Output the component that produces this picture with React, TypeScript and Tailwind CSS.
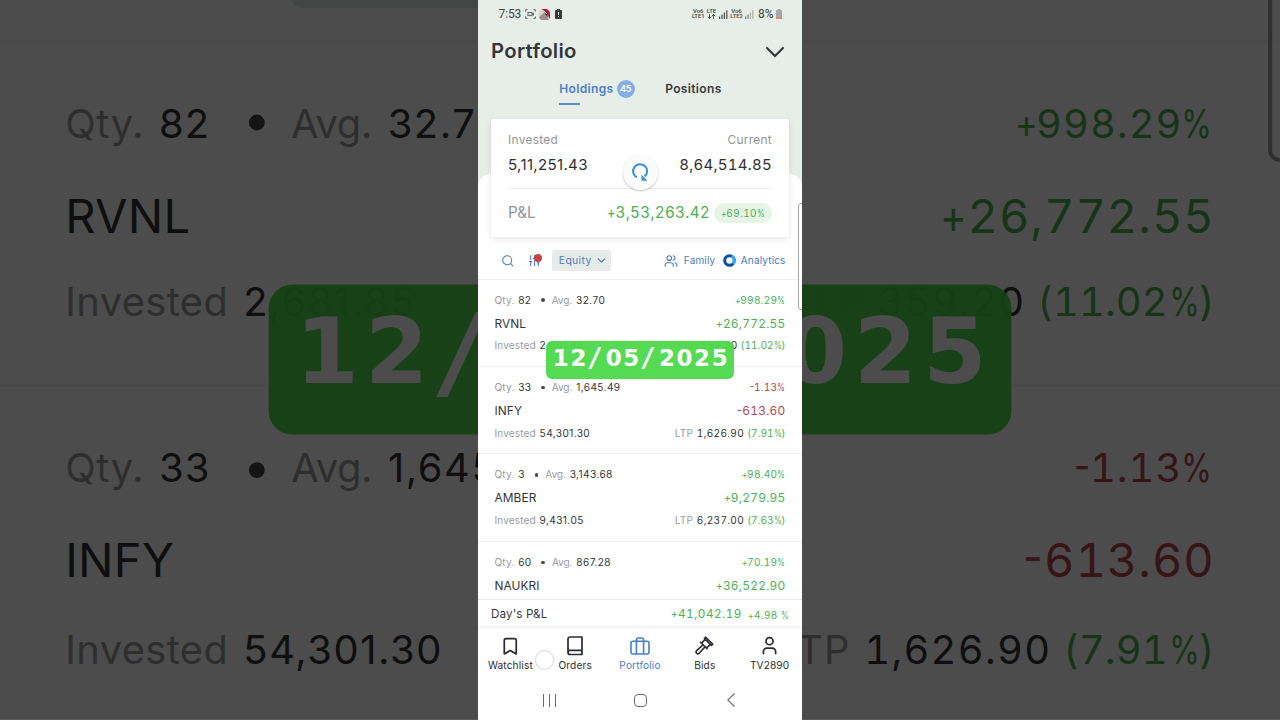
import type { ReactNode } from "react";
import { Bookmark, ChevronDown, Search, SlidersVertical, User, Users } from "lucide-react";

type Holding = {
  name: string;
  qty: string;
  avg: string;
  invested?: string;
  pct: string;
  pnl: string;
  ltp?: string;
  day?: string;
};

const holdings: Holding[] = [
  { name: "RVNL", qty: "82", avg: "32.70", invested: "2,681.85", pct: "+998.29%", pnl: "+26,772.55", ltp: "359.20", day: "(11.02%)" },
  { name: "INFY", qty: "33", avg: "1,645.49", invested: "54,301.30", pct: "-1.13%", pnl: "-613.60", ltp: "1,626.90", day: "(7.91%)" },
  { name: "AMBER", qty: "3", avg: "3,143.68", invested: "9,431.05", pct: "+98.40%", pnl: "+9,279.95", ltp: "6,237.00", day: "(7.63%)" },
  { name: "NAUKRI", qty: "60", avg: "867.28", pct: "+70.19%", pnl: "+36,522.90" },
];

/** Tabular figure with narrowed sign and percent glyphs. */
function Figure({ text }: { text: string }) {
  const parts = text.split(/([+%-])/).filter(Boolean);
  return (
    <>
      {parts.map((p, i) => {
        if (p === "+") return <span key={i} className="-mr-[0.13em] inline-block origin-left scale-x-[0.86]">+</span>;
        if (p === "-") return <span key={i} className="-mr-[0.18em] inline-block origin-left scale-x-[0.9] -translate-y-[0.05em]">-</span>;
        if (p === "%") return <span key={i} className="-mr-[0.2em] inline-block origin-left scale-x-[0.78]">%</span>;
        return <span key={i}>{p}</span>;
      })}
    </>
  );
}

type Side = "left" | "right";

function HoldingRow({ h, only }: { h: Holding; only?: Side }) {
  const tone = h.pnl.startsWith("-") ? "text-[#b5444f]" : "text-[#4eaf53]";
  const left = only !== "right";
  const right = only !== "left";
  return (
    <div className={`h-[87.4px] shrink-0 border-t px-[16.5px] pt-[13px] text-[10.1px] text-[#343538] ${only ? "border-[#f4f4f4]" : "border-[#ededed]"}`}>
      <div className="flex h-[15px] items-center leading-[15px]">
        {left && (
          <div className="flex items-center whitespace-nowrap">
            <span className="text-[#9b9b9f] tracking-[0.15px]">Qty.</span>
            <span className="ml-[3.8px] tracking-[0.25px]">{h.qty}</span>
            <span className="ml-[10px] size-[3.7px] shrink-0 rounded-full bg-[#46474b]" />
            <span className="ml-[6.8px] text-[#9b9b9f] tracking-[-0.1px]">Avg.</span>
            <span className="ml-[4px] tracking-[0.4px]">{h.avg}</span>
          </div>
        )}
        {right && (
          <span className={`ml-auto tabular-nums tracking-[0.27px] ${tone}`}><Figure text={h.pct} /></span>
        )}
      </div>
      <div className="mt-[6.9px] flex h-[18px] items-center text-[11.9px] leading-[18px]">
        {left && <span className="tracking-[0.08px]">{h.name}</span>}
        {right && (
          <span className={`ml-auto tabular-nums tracking-[0.25px] ${tone}`}><Figure text={h.pnl} /></span>
        )}
      </div>
      {h.invested && (
        <div className="mt-[5.8px] flex h-[15px] items-center leading-[15px]">
          {left && (
            <div className="flex whitespace-nowrap">
              <span className="text-[#9b9b9f] tracking-[0.1px]">Invested</span>
              <span className="ml-[3.8px] tracking-[0.4px]">{h.invested}</span>
            </div>
          )}
          {right && (
            <div className="ml-auto flex tabular-nums tracking-[0.33px] whitespace-nowrap">
              <span className="text-[#9b9b9f]">LTP</span>
              <span className="ml-[3.4px]">{h.ltp}</span>
              <span className="ml-[3px] tracking-[0.03px] text-[#4eaf53]"><Figure text={h.day ?? ""} /></span>
            </div>
          )}
        </div>
      )}
    </div>
  );
}

function Slash() {
  return <span className="-ml-[1px] w-[18.7px] font-['DejaVu_Sans_Mono',monospace] text-[26px] tracking-normal">/</span>;
}

function DateBadge({ only }: { only?: Side }) {
  return (
    <div className="flex h-[38.4px] w-[188.5px] items-start rounded-[6px] bg-[#4cd94a]/95 pt-[1px] pr-[5px] pl-[7px] font-['DejaVu_Sans',sans-serif] text-[23px] leading-[32px] font-bold tracking-[1.6px] text-white">
      {only !== "right" && (
        <>
          <span>12</span>
          <Slash />
        </>
      )}
      {!only && (
        <>
          <span>05</span>
          <Slash />
        </>
      )}
      {only !== "left" && <span className="ml-auto">{only ? "025" : "2025"}</span>}
    </div>
  );
}

function ZoomedSide({ side }: { side: Side }) {
  const left = side === "left";
  return (
    <div className={`relative flex h-[720px] w-[478px] shrink-0 overflow-hidden ${left ? "" : "justify-end"}`}>
      <div className={`relative h-[182.3px] w-[324px] shrink-0 scale-[3.951] overflow-hidden bg-white ${left ? "origin-top-left" : "origin-top-right"}`}>
        <div className="flex h-[9.8px] pl-[74px]">
          {left && <div className="h-[2px] w-[59px] rounded-b-[2px] bg-[#e5ebe8]" />}
        </div>
        <HoldingRow h={holdings[0]} only={side} />
        <HoldingRow h={holdings[1]} only={side} />
        <div className="absolute top-[72px] left-[67.8px]">
          <DateBadge only={side} />
        </div>
        {!left && (
          <div className="absolute -top-[66.5px] -right-[4.9px] h-[107px] w-[8px] rounded-[3px] border-[0.7px] border-[#9d9d9d] bg-white/60" />
        )}
        <div className="absolute inset-0 bg-black/70" />
      </div>
    </div>
  );
}

function Signal({ faded = false }: { faded?: boolean }) {
  return (
    <svg width="9" height="9" viewBox="0 0 9 9" fill="#4b504d">
      <rect x="0" y="6.5" width="1.2" height="2.5" opacity={faded ? 0.7 : 1} />
      <rect x="2.4" y="4.5" width="1.2" height="4.5" opacity={faded ? 0.7 : 1} />
      <rect x="4.8" y="2.5" width="1.2" height="6.5" opacity={faded ? 0.4 : 1} />
      <rect x="7.2" y="0.3" width="1.2" height="8.7" opacity={faded ? 0.4 : 1} />
    </svg>
  );
}

function StackedLabel({ top, bottom }: { top: string; bottom: ReactNode }) {
  return (
    <span className="flex flex-col items-center text-[5.9px] leading-[5.2px] font-semibold text-[#4a504d]">
      <span>{top}</span>
      <span className="flex h-[5.2px] items-center">{bottom}</span>
    </span>
  );
}

function StatusBar() {
  return (
    <div className="flex h-[28px] items-center pr-[20px] pl-[20.5px] font-['Roboto',sans-serif] text-[12px] text-[#404643]">
      <span className="w-[22px] tracking-[-0.1px]">7:53</span>
      <svg className="ml-[4px]" width="11" height="10" viewBox="0 0 11 10" fill="none" stroke="#5f6562" strokeWidth="1">
        <path d="M.6 2.5V.7h2M8.4.7h2v1.8M10.4 7.5v1.8h-2M2.6 9.3h-2V7.5" />
        <rect x="3" y="3.4" width="4" height="3.2" />
        <path d="m7 5 1.5-1v2.2z" />
      </svg>
      <svg className="ml-[3.5px]" width="11" height="11" viewBox="0 0 11 11">
        <rect width="11" height="11" rx="4" fill="#d9d3d0" />
        <path d="M2.5 0H6a5 5 0 0 1 5 5v5C9.5 8 8.5 3 2.5 0z" fill="#b40f3b" />
        <path d="M0 8.5 4.5 4l4 2.5 1 4.5H2z" fill="#9b8f8e" />
        <path d="m4.5 3 4 2.5V8z" fill="#3e3034" />
      </svg>
      <svg className="ml-[4.5px]" width="7" height="10" viewBox="0 0 7 10">
        <path d="M2 0h3v1h1a1 1 0 0 1 1 1v7a1 1 0 0 1-1 1H1a1 1 0 0 1-1-1V2a1 1 0 0 1 1-1h1z" fill="#363c39" />
        <path d="M3.5 3v3M3.5 7v1" stroke="#e8eee9" strokeWidth="1" />
      </svg>
      <span className="ml-auto"><StackedLabel top="Vo6" bottom="LTE1" /></span>
      <span className="ml-[2px]">
        <StackedLabel
          top="LTE"
          bottom={
            <svg width="9" height="5" viewBox="0 0 9 5" fill="none" stroke="#3f4542" strokeWidth="0.9">
              <path d="M2.5 0v4.5M.8 2.8l1.7 1.8 1.7-1.8M6.5 5V.5M4.8 2.2 6.5.5l1.7 1.7" />
            </svg>
          }
        />
      </span>
      <span className="ml-[3px]"><Signal /></span>
      <span className="ml-[2px]"><StackedLabel top="Vo6" bottom="LTE2" /></span>
      <span className="ml-[2px]"><Signal faded /></span>
      <span className="ml-[4px]">8%</span>
      <svg className="ml-[2px]" width="6.5" height="10" viewBox="0 0 6.5 10">
        <path d="M1.9 0h2.7v1h.9a1 1 0 0 1 1 1v8H0V2a1 1 0 0 1 1-1h.9z" fill="#a6aaa7" />
        <rect y="8" width="6.5" height="2" fill="#e5896c" />
      </svg>
    </div>
  );
}

function SummaryCard() {
  return (
    <div className="relative mx-[13px] mt-[13px] h-[117.5px] rounded-[3px] bg-white px-[17px] pt-[13px] shadow-[0_2px_6px_rgba(0,0,0,0.1)]">
      <div className="flex h-[16px] items-center justify-between text-[11.9px] tracking-[0.3px] text-[#94959a]">
        <span>Invested</span>
        <span>Current</span>
      </div>
      <div className="mt-[6.5px] flex h-[22px] items-center justify-between text-[15px] text-[#2f3033]">
        <span className="tracking-[0.35px]">5,11,251.43</span>
        <span className="tabular-nums tracking-[0.25px]">8,64,514.85</span>
      </div>
      <div className="mt-[11.5px] h-px bg-[#ececec]" />
      <div className="mt-[13px] flex h-[22px] items-center text-[15.3px]">
        <span className="text-[#94959a]">P&amp;L</span>
        <span className="ml-auto tabular-nums tracking-[0.25px] text-[#4eaf53]"><Figure text="+3,53,263.42" /></span>
        <span className="ml-[4px] flex h-[20px] w-[58px] items-center justify-center rounded-full bg-[#e6f6e6] text-[10px] tabular-nums tracking-[0.4px] text-[#4eaf53]">
          <Figure text="+69.10%" />
        </span>
      </div>
      <div className="absolute top-[35.7px] left-[131.5px] flex size-[35px] items-center justify-center rounded-full bg-[#fbfbfb] shadow-[0_1px_2px_rgba(0,0,0,0.25)]">
        <svg width="20" height="20" viewBox="0 0 20 20" fill="none">
          <path d="M6.8 15.4A7 7 0 1 1 14.6 14.6" stroke="#3592cf" strokeWidth="2" />
          <path d="M11.5 12.8v6h6z" fill="#3592cf" />
        </svg>
      </div>
    </div>
  );
}

function Toolbar() {
  return (
    <div className="mt-[9.7px] flex h-[29px] items-center pr-[16.5px] pl-[23.3px] text-[10.4px] text-[#4a7cc0]">
      <Search size={13.5} strokeWidth={1.9} />
      <div className="relative ml-[13.5px]">
        <SlidersVertical size={13} strokeWidth={2} />
        <div className="absolute -top-[0.5px] -right-[0.5px] size-[8px] rounded-full bg-[#c9434d]" />
      </div>
      <div className="ml-[10.5px] flex h-[20.5px] w-[59.5px] items-center rounded-[2.5px] bg-[#e7ecea] pl-[7px] tracking-[0.35px]">
        Equity
        <ChevronDown className="ml-[3.5px] shrink-0" size={13} strokeWidth={2} />
      </div>
      <Users className="ml-auto" size={14} strokeWidth={1.9} />
      <span className="ml-[6px] text-[10px] tracking-[0.15px]">Family</span>
      <svg className="ml-[8px]" width="13" height="13" viewBox="0 0 13 13" fill="none" strokeWidth="3">
        <circle cx="6.5" cy="6.5" r="4.8" stroke="#0d4ca3" />
        <path d="M8.5 2.1a4.8 4.8 0 0 1 1.4 7.8" stroke="#35aee8" />
      </svg>
      <span className="ml-[4.5px] text-[10px] tracking-[0.15px]">Analytics</span>
    </div>
  );
}

function NavItem({ label, active = false, children }: { label: string; active?: boolean; children: ReactNode }) {
  return (
    <div className={`flex w-[64.8px] shrink-0 flex-col items-center ${active ? "text-[#4580cb]" : "text-[#2b2c33]"}`}>
      <div className="flex h-[20px] items-center">{children}</div>
      <span className="mt-[2.3px] text-[10.1px] leading-[15px] tracking-[0.15px] whitespace-nowrap">{label}</span>
    </div>
  );
}

function BottomNav() {
  return (
    <div className="relative flex h-[53px] pt-[8px] shadow-[0_-1px_3px_rgba(0,0,0,0.07)]">
      <NavItem label="Watchlist"><Bookmark size={20.5} strokeWidth={2} /></NavItem>
      <NavItem label="Orders">
        <svg width="16" height="20" viewBox="0 0 16 20" fill="none" stroke="currentColor" strokeWidth="1.7" strokeLinejoin="round" strokeLinecap="round">
          <path d="M1 16V3a2 2 0 0 1 2-2h12v17.5H3a2 2 0 0 1-2-2 2 2 0 0 1 2-2.2h12" />
        </svg>
      </NavItem>
      <NavItem label="Portfolio" active>
        <svg width="20" height="18" viewBox="0 0 20 18" fill="none" stroke="currentColor" strokeWidth="1.6" strokeLinejoin="round">
          <rect x="1" y="4.2" width="18" height="12.8" rx="2" />
          <path d="M6.4 17V3a2 2 0 0 1 2-2h3.2a2 2 0 0 1 2 2v14" />
        </svg>
      </NavItem>
      <NavItem label="Bids">
        <svg width="19" height="19" viewBox="0 0 19 19" fill="none" stroke="currentColor" strokeWidth="1.6" strokeLinejoin="round" strokeLinecap="round">
          <path d="m10.8 1.2 7 7-1.4 1.2-7-7zM10.2 3.2 7 6.6M15.4 8.600l-3.600 3M5.500 6.200l6.600 6.400M8 8.900l-6.400 5.800a1.700 1.700 0 0 0 2.500 2.500l5.900-6.300" />
        </svg>
      </NavItem>
      <NavItem label="TV2890"><User size={21} strokeWidth={2} /></NavItem>
      <div className="absolute top-[22.5px] left-[56.5px] size-[19.5px] rounded-full border border-[#d3d7db] bg-white/90" />
    </div>
  );
}

function SystemBar() {
  return (
    <div className="flex h-[39px] items-center pl-[65px] text-[#6b6b6d]">
      <svg width="13" height="13" viewBox="0 0 13 13" stroke="currentColor" strokeWidth="1">
        <path d="M.5 0v13M6.5 0v13M12.5 0v13" />
      </svg>
      <div className="ml-[77.5px] size-[13.5px] rounded-[4px] border border-[#6b6b6d]" />
      <svg className="ml-[80px]" width="8" height="14" viewBox="0 0 8 14" fill="none" stroke="currentColor" strokeWidth="1.1">
        <path d="M7.5.5.8 7l6.700 6.500" />
      </svg>
    </div>
  );
}

function Phone() {
  return (
    <div className="relative flex h-[720px] w-[324px] shrink-0 flex-col overflow-hidden bg-white">
      <div className="flex h-[278.7px] shrink-0 flex-col bg-[#e7eee8]">
        <StatusBar />
        <div className="flex h-[47px] items-center justify-between pr-[17px] pl-[13px]">
          <h1 className="text-[20.3px] font-semibold tracking-[0.3px] text-[#30373d]">Portfolio</h1>
          <svg width="20" height="12" viewBox="0 0 20 12" fill="none" stroke="#2f373b" strokeWidth="2.1" strokeLinecap="round">
            <path d="m2 2 8 8 8-8" />
          </svg>
        </div>
        <div className="flex h-[31px] pt-[4.3px] pl-[81.3px] text-[12px] leading-[20px] font-semibold tracking-[0.35px]">
          <div className="text-[#4a80ce]">
            <div className="flex items-center">
              Holdings
              <span className="ml-[3px] flex size-[18.3px] items-center justify-center rounded-full bg-[#86aee6] text-[9px] tracking-normal text-white">45</span>
            </div>
            <div className="mt-[4px] h-[2px] w-[20.5px] bg-[#5b8dd6]" />
          </div>
          <span className="ml-[30.3px] text-[#343a3e]">Positions</span>
        </div>
        <div className="flex grow flex-col bg-[linear-gradient(#fff,#fff),radial-gradient(circle_at_12px_12px,#fff_11.5px,transparent_12px),radial-gradient(circle_at_0_12px,#fff_11.5px,transparent_12px),linear-gradient(#fff,#fff)] bg-[size:100%_94px,12px_12px,12px_12px,300px_12px] bg-[position:0_80px,0_68px,100%_68px,12px_68px] bg-no-repeat">
          <SummaryCard />
          <Toolbar />
        </div>
      </div>
      <div className="flex h-[320.3px] shrink-0 flex-col overflow-hidden">
        {holdings.map((h) => (
          <HoldingRow key={h.name} h={h} />
        ))}
      </div>
      <div className="flex h-[29px] shrink-0 items-center border-t border-[#ececec] px-[13px] pt-[2.5px] text-[11.7px]">
        <span className="tracking-[0.1px] text-[#3b3c40]">Day&apos;s P&amp;L</span>
        <span className="ml-auto tabular-nums tracking-[0.5px] text-[#4eaf53]"><Figure text="+41,042.19" /></span>
        <span className="ml-[6.5px] text-[10px] tabular-nums tracking-[0.4px] text-[#4eaf53]"><Figure text="+4.98 %" /></span>
      </div>
      <BottomNav />
      <SystemBar />
      <div className="absolute top-[340.7px] left-[67.8px]">
        <DateBadge />
      </div>
      <div className="absolute top-[203px] -right-[4px] h-[107px] w-[8px] rounded-[3px] border border-[#a8a8a8] bg-white/60" />
    </div>
  );
}

export default function App() {
  return (
    <div className="flex h-[720px] w-[1280px] overflow-hidden bg-[#4b4b4b] font-['Inter',sans-serif]">
      <ZoomedSide side="left" />
      <Phone />
      <ZoomedSide side="right" />
    </div>
  );
}
